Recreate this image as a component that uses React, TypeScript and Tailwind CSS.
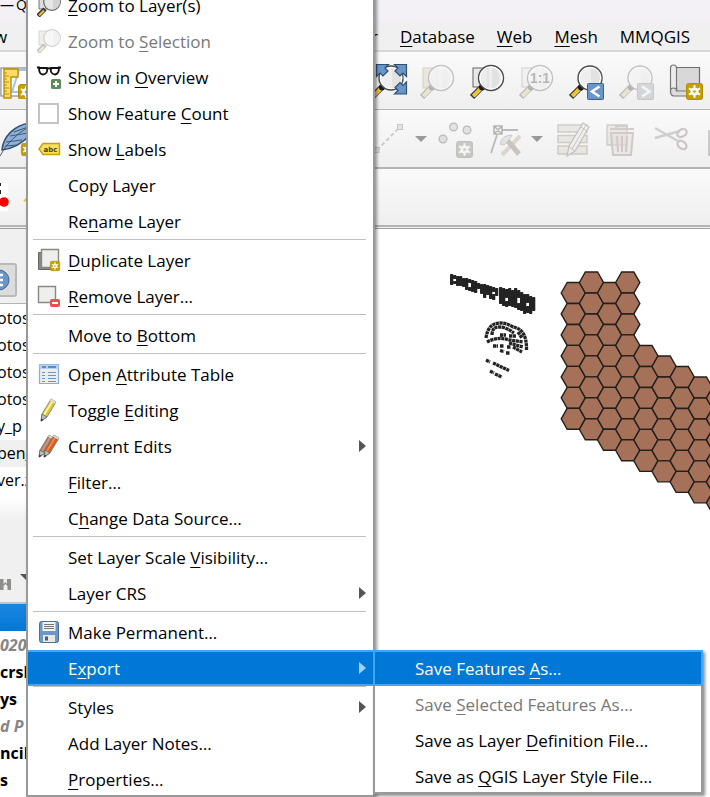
import type { ReactNode } from "react";

/* ---------- shared drawing parts ---------- */

function NewBadge({ x, y, muted = false, size = 16 }: { x: number; y: number; muted?: boolean; size?: number }) {
  const spokes = [0, 60, 120];
  return (
    <g transform={`translate(${x} ${y}) scale(${size / 16})`}>
      <rect x="0.5" y="0.5" width="15" height="15" rx="2.5" fill={muted ? "#6e654a" : "#c6a000"} stroke={muted ? "#5b533c" : "#b18f00"} />
      <circle cx="8" cy="8" r="3" fill="none" stroke="#fff" strokeWidth="1.6" />
      {spokes.map((a) => (
        <path key={a} d="M8 2v12" stroke="#fff" strokeWidth="1.8" transform={`rotate(${a} 8 8)`} />
      ))}
      <circle cx="8" cy="8" r="1.2" fill={muted ? "#6e654a" : "#c6a000"} />
    </g>
  );
}

function Lens({ r = 12 }: { r?: number }) {
  return (
    <g>
      <path d="M13 24L3 34" stroke="#3a3a3a" strokeWidth="6" />
      <path d="M11.500 25.500L4 33" stroke="#f5c02c" strokeWidth="3.600" />
      <path d="M12.500 27L5.500 34" stroke="#fff0b0" strokeWidth="0.900" />
      <circle cx="13" cy="24.500" r="3" fill="#1b1b1b" />
      <circle cx="22" cy="15" r={r} fill="#ececec" fillOpacity="0.850" stroke="#4a4a4a" strokeWidth="1.400" />
      <path d={`M23 4.500a${r - 1.5} ${r - 1.5} 0 0 1 0 21z`} fill="#dedede" fillOpacity="0.800" />
      <circle cx="22" cy="15" r={r - 1.4} fill="none" stroke="#fff" strokeWidth="1" />
    </g>
  );
}

function Tool({ label, muted = false, children }: { label: string; muted?: boolean; children: ReactNode }) {
  return (
    <button type="button" aria-label={label} className="shrink-0">
      <svg width="36" height="36" viewBox="0 0 36 36" className={muted ? "overflow-visible opacity-30 saturate-50" : "overflow-visible"} aria-hidden="true">
        {children}
      </svg>
    </button>
  );
}

function DropArrow({ label }: { label: string }) {
  return (
    <button type="button" aria-label={label} className="shrink-0">
      <svg width="12" height="6" viewBox="0 0 12 6" aria-hidden="true">
        <path d="M0 0h12L6 6z" fill="#999" />
      </svg>
    </button>
  );
}

/* ---------- toolbars ---------- */

function NavigationBar() {
  return (
    <div className="flex h-[58px] items-center border-b border-[#b4b4b4] bg-linear-to-b from-[#fafafa] to-[#efefef]">
      <div className="w-[369px] shrink-0">
        <svg width="36" height="36" viewBox="0 0 36 36" aria-hidden="true">
          <rect x="1" y="5" width="33" height="28" fill="#fff" stroke="#777" />
          <path d="M19 7h12v22H12z" fill="#fff" stroke="#a8c0e8" strokeWidth="2" />
          <path d="M4 6h14v8h-7v21H4z" fill="#fbdb6a" stroke="#b89100" strokeWidth="1.400" />
          <path d="M4 10h3M4 13h5M4 16h3M4 19h5M4 22h3M4 25h5M4 28h3M4 31h5" stroke="#b89100" />
          <NewBadge x={18} y={21} />
        </svg>
      </div>
      <div className="flex min-w-0 flex-1 gap-[14px]">
        <Tool label="Zoom Full">
          <Lens />
          <g fill="#6896c6" stroke="#2f4f74" strokeWidth="1.200">
            <path d="M7.500 1.500h12l-3.500 3.500 3 3-5 5-3-3-3.500 3.500z" />
            <path d="M37.500 1.500h-12l3.500 3.500-3 3 5 5 3-3 3.500 3.500z" />
            <path d="M37.500 31h-12l3.500-3.500-3-3 5-5 3 3 3.500-3.500z" />
          </g>
        </Tool>
        <Tool label="Zoom to Selection" muted>
          <rect x="4" y="5" width="15" height="20" fill="#d9c48c" stroke="#8d7d4d" />
          <Lens r={12.5} />
        </Tool>
        <Tool label="Zoom to Layer">
          <rect x="4" y="5" width="15" height="19" fill="#e8e8e8" stroke="#666" />
          <Lens r={12.5} />
        </Tool>
        <Tool label="Zoom to Native Resolution" muted>
          <g transform="translate(-1 0)">
            <rect x="4" y="5" width="15" height="19" fill="#e8e8e8" stroke="#777" />
            <Lens r={12.5} />
            <text x="22" y="20" textAnchor="middle" className="font-['Liberation_Sans',sans-serif] text-[14px] font-bold" fill="#222">
              1:1
            </text>
          </g>
        </Tool>
        <Tool label="Zoom Last">
          <g transform="translate(-1 0)">
            <Lens />
            <rect x="19.500" y="20.500" width="16" height="16" rx="1" fill="#6896c6" stroke="#3d618a" />
            <path d="M31.500 23.500l-7.500 5 7.500 5" fill="none" stroke="#fff" strokeWidth="2.600" />
          </g>
        </Tool>
        <Tool label="Zoom Next" muted>
          <g transform="translate(-1 0)">
            <Lens />
            <rect x="19.500" y="20.500" width="16" height="16" rx="1" fill="#8c959e" stroke="#5c6670" />
            <path d="M24 23.500l7.500 5-7.500 5" fill="none" stroke="#fff" strokeWidth="2.600" />
          </g>
        </Tool>
        <Tool label="New Map View">
          <path d="M6 4.500h24.500v26H8z" fill="#d8d8d8" stroke="#6c6c6c" strokeWidth="1.200" />
          <path d="M1.500 5q0-3 3-3t3 3v21q-6-1-6 4z" fill="#ececec" stroke="#777" strokeWidth="1.200" />
          <path d="M1.500 28q0-3 3-3 3 0 3 3H28v5H5q-3.500 0-3.500-5z" fill="#dcdcdc" stroke="#777" strokeWidth="1.200" />
          <NewBadge x={17} y={20} size={17} />
        </Tool>
      </div>
    </div>
  );
}

function DigitizingBar() {
  return (
    <div className="flex h-[59px] items-center border-b-2 border-[#b4b4b4] bg-linear-to-b from-[#fafafa] to-[#efefef]">
      <div className="w-[371px] shrink-0">
        <svg width="36" height="40" viewBox="0 0 36 40" aria-hidden="true">
          <path d="M2 31C3 18 14 6 30 4v12Q18 29 2 31z" fill="#8fb0d6" stroke="#34506f" strokeWidth="1.500" />
          <path d="M0 37Q8 20 30 7M10 17l18-3M6 23l16-2M14 13l14-5M5 27l12-1" fill="none" stroke="#34506f" strokeWidth="0.900" />
          <NewBadge x={21} y={24} size={13} />
        </svg>
      </div>
      <div className="flex min-w-0 flex-1 items-center gap-3">
        <div className="flex items-center gap-2">
          <Tool label="Add Line Feature" muted>
            <path d="M6 29L29 6" stroke="#666" strokeWidth="1.800" strokeDasharray="4 2.500" />
            <rect x="3" y="26.500" width="5" height="5" fill="#bbb" stroke="#555" />
            <rect x="26.500" y="3.500" width="5" height="5" fill="#bbb" stroke="#555" />
          </Tool>
          <DropArrow label="Line feature options" />
        </div>
        <Tool label="Add Point Feature" muted>
          <g fill="#a9b8a9" stroke="#333" strokeWidth="1.300">
            <circle cx="14.500" cy="6" r="3.900" />
            <circle cx="28" cy="9" r="3.900" />
            <circle cx="4" cy="18" r="3.900" />
          </g>
          <NewBadge x={17} y={20} size={17} muted />
        </Tool>
        <div className="flex items-center gap-2">
          <Tool label="Vertex Tool" muted>
            <path d="M15 9h16M10 14L4 32" stroke="#333" strokeWidth="1.800" />
            <path d="M7 5h8v8H7zM7 5l8 8M15 5l-8 8" fill="none" stroke="#222" strokeWidth="1.600" />
            <path d="M15 34l18-19" stroke="#a8965c" strokeWidth="4" />
            <path d="M20 19l12 14" stroke="#6e5a35" strokeWidth="5" />
            <path d="M13 23q2-9 12-9l-3 5-5 5z" fill="#bbb" stroke="#666" />
          </Tool>
          <DropArrow label="Vertex tool options" />
        </div>
        <Tool label="Modify Attributes" muted>
          <g fill="#cfcba5" stroke="#777242" strokeWidth="1.500">
            <path d="M3 4h29v7H3zM3 14.500h29v7H3zM3 25h29v8H3z" />
          </g>
          <path d="M12 35l2-10L28 2l6 4-14 24z" fill="#f2e2da" stroke="#5c5150" strokeWidth="1.300" />
          <path d="M14 26l6 4M26 6l6 4M17 28L31 4" stroke="#5c5150" />
        </Tool>
        <Tool label="Delete Selected" muted>
          <path d="M4 4h20v20H4z" fill="#cfcba5" stroke="#777242" strokeWidth="1.300" />
          <path d="M8 12h22l-2 22H10zM7 8h24M13 8V5h11v3M14 15l1 16M19 15v16M24 15l-1 16" fill="#d8a8a4" fillOpacity="0.500" stroke="#9c6262" strokeWidth="2" />
        </Tool>
        <Tool label="Cut Features" muted>
          <path d="M4 7l23 13M4 17l25-7" stroke="#777" strokeWidth="2.500" />
          <ellipse cx="31" cy="12" rx="5" ry="3.500" transform="rotate(-30 31 12)" fill="none" stroke="#86585a" strokeWidth="2.400" />
          <ellipse cx="31" cy="24" rx="5" ry="3.500" transform="rotate(40 31 24)" fill="none" stroke="#86585a" strokeWidth="2.400" />
        </Tool>
        <Tool label="Copy Features" muted>
          <path d="M10 10h22v24H10z" fill="#ddd" stroke="#444" strokeWidth="1.500" />
        </Tool>
      </div>
    </div>
  );
}

function PluginBar() {
  return (
    <div className="flex h-[58px] items-center border-b-2 border-[#b4b4b4] bg-linear-to-b from-[#fafafa] to-[#efefef]">
      <svg width="36" height="30" viewBox="0 0 36 30" aria-hidden="true">
        <path d="M0 1h8v28H0z" fill="#fff" />
        <path d="M0 1v3M0 8v4" stroke="#222" strokeWidth="2" />
        <circle cx="4" cy="20" r="4.800" fill="#f00" />
        <path d="M23 19l4-4v5z" fill="#f6c500" />
      </svg>
    </div>
  );
}

/* ---------- window behind the menus ---------- */

function SidePanels() {
  const files = ["otos", "otos", "otos", "otos", "y_p", "pen_", "ver.z"];
  const layers = [
    { name: "020", group: true },
    { name: "crsl", group: false },
    { name: "ys", group: false },
    { name: "d P", group: true },
    { name: "ncili", group: false },
    { name: "s", group: false },
  ];
  return (
    <aside className="flex w-[375px] shrink-0 flex-col bg-[#f0f0f0] text-base">
      <div className="flex h-[75px] items-end border-b border-[#b4b4b4] pb-[6px]">
        <button type="button" aria-label="Properties" className="h-[34px] w-[17px] rounded-r-[3px] border-2 border-l-0 border-[#b9b9b9] bg-[#dcdcdc]">
          <svg width="10" height="22" viewBox="0 0 10 22" aria-hidden="true">
            <circle cx="-1" cy="11" r="10" fill="#6896c6" stroke="#44688f" />
            <path d="M0 6h3M0 11h3M0 16h3" stroke="#fff" strokeWidth="2.500" />
          </svg>
        </button>
      </div>
      <ul className="h-[194px] bg-white pt-px -indent-[3px] leading-[27px]">
        {files.map((name, i) => (
          <li key={i} className={name === "pen_" ? "h-[27px] bg-[#f0f0f0]" : "h-[27px]"}>
            {name}
          </li>
        ))}
      </ul>
      <div className="h-[22px] bg-linear-to-b from-white to-[#f0f0f0]" />
      <div className="flex h-[84px] items-end border-b-2 border-[#c2c2c2] pb-[11px]">
        <svg width="28" height="18" viewBox="0 0 28 18" aria-hidden="true">
          <path d="M0 6h11v11H7.500v-4L5.500 11l-2 2v4H0z" fill="#8e8e8a" />
          <path d="M3.500 6h3.500v5l-1.500-2-2 2z" fill="#eee" />
          <path d="M20 1h12l-6 6z" fill="#555" />
        </svg>
      </div>
      <ul className="min-h-0 flex-1 overflow-hidden bg-white leading-[28px] font-bold">
        <li className="h-[27px] bg-linear-to-b from-[#1b86e0] to-[#0078d7]" />
        {layers.map(({ name, group }) => (
          <li key={name} className={group ? "h-[27px] text-[#858585] italic" : "h-[27px]"}>
            {name}
          </li>
        ))}
      </ul>
    </aside>
  );
}

const hexColumns = [
  { top: 293, count: 7 },
  { top: 282.5, count: 8 },
  { top: 293, count: 8 },
  { top: 282.5, count: 9 },
  { top: 356, count: 6 },
  { top: 366.5, count: 6 },
  { top: 377, count: 6 },
  { top: 387.5, count: 6 },
  { top: 398, count: 6 },
];

const buildingBlocks = [
  [450, 274, 11], [453, 275, 4], [453, 281, 3], [456, 276, 10], [459, 276, 10], [462, 278, 9], [465, 278, 12],
  [468, 279, 4], [468, 287, 4], [471, 280, 12], [474, 281, 12], [477, 283, 6], [480, 284, 10],
  [483, 284, 14], [486, 285, 10], [489, 286, 13], [492, 287, 5], [492, 294, 6], [495, 288, 8],
  [499, 287, 17], [502, 288, 18], [505, 289, 9], [505, 301, 6], [508, 288, 18], [511, 290, 17], [514, 288, 20],
  [517, 290, 8], [517, 303, 7], [520, 292, 19], [523, 294, 20], [526, 294, 9], [526, 306, 7],
  [529, 296, 18], [532, 297, 14],
];

function MapCanvas() {
  const hexes = hexColumns.flatMap(({ top, count }, c) =>
    Array.from({ length: count }, (_, r) => ({ x: 573.3 + c * 18.15, y: top + r * 20.97 })),
  );
  return (
    <main className="min-w-0 flex-1 overflow-hidden bg-white">
      <svg width="400" height="568" viewBox="375 229 400 568" role="img" aria-label="Map canvas">
        <g fill="#a57259" stroke="#231f1c" strokeWidth="1.400">
          {hexes.map(({ x, y }) => (
            <path key={`${x}-${y}`} d={`M${x - 12.1} ${y}l6-10.500h12.200l6 10.500-6 10.500h-12.200z`} />
          ))}
        </g>
        <g fill="#232323">
          {buildingBlocks.map(([x, y, h]) => (
            <rect key={`${x}-${y}`} x={x} y={y} width="3.300" height={h} rx="0.800" />
          ))}
        </g>
        <g fill="none" stroke="#232323" strokeWidth="3.300" strokeDasharray="3.200 0.500">
          <path d="M486 338Q488 323 500 323Q507 323 513 327Q527 329 526.500 350" />
          <path d="M492 335Q492 327 499 327Q506 327 514 333" />
          <path d="M487 342Q498 336 509 340L523 342M500 335h6M509 336h7M518 332l4 6" />
          <path d="M493 346h5M500 346h4M507 347h4M513 347l9 5M500 350.500l4 1M506 353h4M509 343l14 4" />
          <path d="M486 360l4 2M493 363l16 7.500M490 371l4 2M495 374l7 3" />
        </g>
      </svg>
    </main>
  );
}

/* ---------- menu icons ---------- */

const svgProps = { width: 24, height: 24, viewBox: "0 0 24 24", "aria-hidden": true } as const;

const ZoomIcon = ({ muted = false }: { muted?: boolean }) => (
  <svg {...svgProps} className={muted ? "opacity-30 saturate-50" : ""}>
    <path d="M2 2h10v14H2z" fill={muted ? "#dccb95" : "#ddd"} stroke="#777" />
    <path d="M8 16l-7 7" stroke="#333" strokeWidth="4.500" />
    <path d="M7 17.500L2 22.500" stroke="#f5c02c" strokeWidth="2.200" />
    <circle cx="15" cy="9" r="8.300" fill="#e6e6e6" stroke="#666" strokeWidth="1.200" />
    <path d="M16 2a7 7 0 0 1 0 14z" fill="#d3d3d3" />
  </svg>
);

const OverviewIcon = () => (
  <svg {...svgProps}>
    <g fill="none" stroke="#111" strokeWidth="1.800">
      <path d="M2 3h8q1 6-4 6.500-4 0-4-6.500zM14 3h8q0 6-4 6.500-5-.5-4-6.500zM10 4q2-1.500 4 0M0 2.500h3M24 2.500h-3" />
    </g>
    <rect x="14" y="14" width="10" height="10" rx="1.500" fill="#5b8c5a" />
    <path d="M19 16v6M16 19h6" stroke="#fff" strokeWidth="2" />
  </svg>
);

const LabelsIcon = () => (
  <svg {...svgProps}>
    <path d="M2 12l4-5.500h16.500v11H6z" fill="#f7df60" stroke="#c6a000" strokeWidth="1.400" />
    <text x="13.500" y="15" textAnchor="middle" className="font-['DejaVu_Sans',sans-serif] text-[7px] font-bold" fill="#4a4210">
      abc
    </text>
  </svg>
);

const DuplicateIcon = () => (
  <svg {...svgProps}>
    <path d="M1.500 4.500h17v17h-17z" fill="#888a80" stroke="#666860" />
    <path d="M4.500 1.500h17v18h-17z" fill="#eeeeec" stroke="#888a80" strokeWidth="1.400" />
    <NewBadge x={13} y={13} size={10} />
  </svg>
);

const RemoveIcon = () => (
  <svg {...svgProps}>
    <path d="M1.500 2.500h17v16h-17z" fill="#eeeeec" stroke="#888a80" strokeWidth="1.400" />
    <rect x="13" y="15" width="10" height="8" rx="2" fill="#ee4c50" />
    <path d="M15 19h6" stroke="#fff" strokeWidth="2" />
  </svg>
);

const TableIcon = () => (
  <svg {...svgProps}>
    <path d="M2.500 2.500h19v19h-19z" fill="#eeeeec" stroke="#85aedb" strokeWidth="1.200" />
    <path d="M2.500 2.500h19v4.500h-19z" fill="#b5d0ee" />
    <path d="M5 5h4M11 5h8" stroke="#5c8dc4" strokeWidth="2" />
    <path d="M5 10.500h3M11 10.500h8M5 13.500h3M11 13.500h8M5 16.500h3M11 16.500h8M5 19.500h3M11 19.500h8" stroke="#6896c6" />
  </svg>
);

const Pencil = ({ color, light }: { color: string; light: string }) => (
  <g>
    <path d="M4 23l1-7L14 1l5 3-9 15z" fill={color} stroke="#777" strokeWidth="0.800" />
    <path d="M7 17l9-15" stroke={light} strokeWidth="1.800" />
    <path d="M5 16l5 3-6 4z" fill="#bdbdb9" stroke="#666" strokeWidth="0.800" />
    <path d="M14 1l5 3-1 1.500-5-3z" fill="#ddd" />
    <path d="M4.500 20.500L4 23.500l2.500-1.500z" fill="#333" />
  </g>
);

const EditingIcon = () => (
  <svg {...svgProps}>
    <Pencil color="#d8c83a" light="#fff3a0" />
  </svg>
);

const EditsIcon = () => (
  <svg {...svgProps}>
    <g transform="translate(-2 0)">
      <Pencil color="#ad7a5b" light="#c79a80" />
    </g>
    <g transform="translate(3 0)">
      <Pencil color="#dd5a1e" light="#f08a4b" />
    </g>
  </svg>
);

const SaveIcon = () => (
  <svg {...svgProps}>
    <rect x="2.500" y="1.500" width="19" height="21" rx="2" fill="#6d97c6" stroke="#4e6f96" />
    <path d="M5.500 2h13v9h-13z" fill="#f3f3f1" />
    <path d="M7 4.500h10M7 6.500h10M7 8.500h10" stroke="#777" />
    <path d="M6 15h12v7H6z" fill="#e8e8e4" />
    <path d="M8 16.500h3v4H8z" fill="#44607f" />
  </svg>
);

/* ---------- menus ---------- */

type Entry = {
  label: string;
  /** Index of the underlined access key within the label. */
  mnemonic?: number;
  icon?: ReactNode;
  disabled?: boolean;
  active?: boolean;
  submenu?: boolean;
  checkbox?: boolean;
};

function Caption({ label, mnemonic }: { label: string; mnemonic?: number }) {
  if (mnemonic === undefined) return <span className="pt-[2px]">{label}</span>;
  return (
    <span className="pt-[2px]">
      {label.slice(0, mnemonic)}
      <u className="decoration-1 underline-offset-3">{label[mnemonic]}</u>
      {label.slice(mnemonic + 1)}
    </span>
  );
}

function rowTone({ active, disabled }: Entry) {
  if (active) return "bg-[#0078d7] text-white border-[#42a5f5]";
  if (disabled) return "border-transparent text-[#787878]";
  return "border-transparent text-black";
}

function MenuRow(entry: Entry) {
  const { label, mnemonic, icon, disabled, active, submenu, checkbox } = entry;
  if (checkbox) {
    return (
      <label className="flex h-9 items-center">
        <span className="flex w-10 shrink-0 pl-[10px]">
          <input type="checkbox" className="size-[21px] appearance-none border-2 border-[#c4c4c4] bg-white" />
        </span>
        <Caption label={label} mnemonic={mnemonic} />
      </label>
    );
  }
  return (
    <button
      type="button"
      role="menuitem"
      disabled={disabled}
      aria-haspopup={submenu ? "menu" : undefined}
      className={`flex h-9 w-full items-center border-y-2 text-left ${rowTone(entry)}`}
    >
      <span className="flex w-10 shrink-0 pl-[9px]">{icon}</span>
      <Caption label={label} mnemonic={mnemonic} />
      {submenu && (
        <svg width="7" height="12" viewBox="0 0 7 12" className="mr-[7px] ml-auto" aria-hidden="true">
          <path d="M0 0l7 6-7 6z" fill={active ? "#a6d0f5" : "#555"} />
        </svg>
      )}
    </button>
  );
}

const groups: Entry[][] = [
  [
    { label: "Zoom to Layer(s)", mnemonic: 0, icon: <ZoomIcon /> },
    { label: "Zoom to Selection", mnemonic: 8, icon: <ZoomIcon muted />, disabled: true },
    { label: "Show in Overview", mnemonic: 8, icon: <OverviewIcon /> },
    { label: "Show Feature Count", mnemonic: 13, checkbox: true },
    { label: "Show Labels", mnemonic: 5, icon: <LabelsIcon /> },
    { label: "Copy Layer" },
    { label: "Rename Layer", mnemonic: 2 },
  ],
  [
    { label: "Duplicate Layer", mnemonic: 0, icon: <DuplicateIcon /> },
    { label: "Remove Layer…", mnemonic: 0, icon: <RemoveIcon /> },
  ],
  [{ label: "Move to Bottom", mnemonic: 8 }],
  [
    { label: "Open Attribute Table", mnemonic: 5, icon: <TableIcon /> },
    { label: "Toggle Editing", mnemonic: 7, icon: <EditingIcon /> },
    { label: "Current Edits", icon: <EditsIcon />, submenu: true },
    { label: "Filter…", mnemonic: 0 },
    { label: "Change Data Source…", mnemonic: 1 },
  ],
  [
    { label: "Set Layer Scale Visibility…", mnemonic: 16 },
    { label: "Layer CRS", submenu: true },
  ],
  [
    { label: "Make Permanent…", icon: <SaveIcon /> },
    { label: "Export", mnemonic: 1, active: true, submenu: true },
  ],
  [{ label: "Styles", submenu: true }, { label: "Add Layer Notes…" }, { label: "Properties…", mnemonic: 0 }],
];

const exportEntries: Entry[] = [
  { label: "Save Features As…", mnemonic: 14, active: true },
  { label: "Save Selected Features As…", mnemonic: 5, disabled: true },
  { label: "Save as Layer Definition File…", mnemonic: 14 },
  { label: "Save as QGIS Layer Style File…", mnemonic: 8 },
];

function ExportMenu() {
  return (
    <ul role="menu" className="absolute top-0 left-full w-[330px] border-2 border-[#999] bg-white shadow-[2px_2px_3px_rgba(0,0,0,0.45)]">
      {exportEntries.map((entry, i) => (
        <li
          key={entry.label}
          className={i === 0 ? "-mx-[2px] -mt-[2px] border-x-2 border-[#42a5f5] bg-[#0078d7]" : i === exportEntries.length - 1 ? "-mb-[2px]" : ""}
        >
          <MenuRow {...entry} />
        </li>
      ))}
    </ul>
  );
}

function LayerMenu() {
  return (
    <div role="menu" className="absolute -top-[15px] left-[26px] w-[349px] border-2 border-[#999] bg-white shadow-[2px_2px_3px_rgba(0,0,0,0.4)]">
      {groups.map((entries, g) => (
        <ul key={g} className={g === groups.length - 1 ? "-mb-[2px]" : ""}>
          {entries.map((entry) => (
            <li key={entry.label} className="relative">
              <MenuRow {...entry} />
              {entry.label === "Export" && <ExportMenu />}
            </li>
          ))}
          {g < groups.length - 1 && <li role="separator" className="mr-[7px] mb-[2px] ml-[5px] h-px bg-[#c0c0c0]" />}
        </ul>
      ))}
    </div>
  );
}

export default function App() {
  return (
    <div className="relative flex h-screen flex-col overflow-hidden bg-[#f0f0f0] font-['Open_Sans','Noto_Sans',sans-serif] text-[17px] text-black">
      <header className="flex h-[21px] shrink-0 items-center gap-[2px] bg-[#f3f1f6] pb-3 text-sm">
        <span>—</span>
        <span>Q</span>
      </header>
      <nav className="flex h-[31px] shrink-0 items-center border-b-2 border-[#d8d8d8] bg-[#f0f0f0] pt-[2px]">
        <div className="flex w-[378px] shrink-0 justify-between">
          <button type="button" className="-ml-[6px]">w</button>
          <button type="button">r</button>
        </div>
        <div className="flex gap-[22px] pl-[22px]">
          <button type="button"><Caption label="Database" mnemonic={0} /></button>
          <button type="button"><Caption label="Web" mnemonic={0} /></button>
          <button type="button"><Caption label="Mesh" mnemonic={0} /></button>
          <button type="button">MMQGIS</button>
        </div>
      </nav>
      <div className="shrink-0 overflow-hidden border-b border-[#a0a0a0] pb-px">
        <NavigationBar />
        <DigitizingBar />
        <PluginBar />
      </div>
      <div className="flex min-h-0 flex-1">
        <SidePanels />
        <MapCanvas />
      </div>
      <LayerMenu />
    </div>
  );
}
